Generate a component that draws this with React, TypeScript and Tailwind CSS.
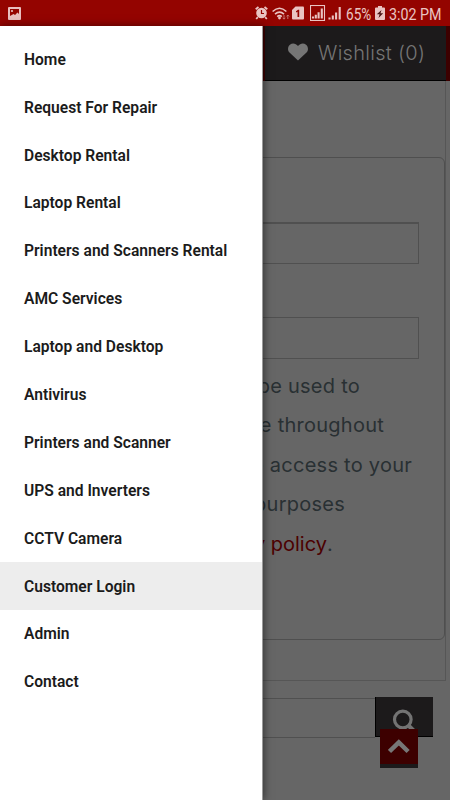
import React from "react";

const menu = [
  "Home",
  "Request For Repair",
  "Desktop Rental",
  "Laptop Rental",
  "Printers and Scanners Rental",
  "AMC Services",
  "Laptop and Desktop",
  "Antivirus",
  "Printers and Scanner",
  "UPS and Inverters",
  "CCTV Camera",
  "Customer Login",
  "Admin",
  "Contact",
];

function StatusBar() {
  return (
    <header className="flex h-[26px] items-center bg-[#940400] pl-2 pr-[9px] text-[#eac4c2]">
      <svg className="mt-px h-[13px] w-[13px]" viewBox="0 0 13 13" fill="none">
        <rect width="13" height="13" rx="1" fill="#e8bfbf" />
        <path d="M2 2h9v5L9.500 5.500 7 8 5.500 7 2 9z" fill="#940400" />
        <circle cx="4" cy="4" r="1.100" fill="#e8bfbf" />
      </svg>
      <div className="ml-auto flex items-center">
        <svg className="h-[14px] w-[13px]" viewBox="0 0 13 14" fill="none">
          <circle cx="6.500" cy="7" r="5.300" fill="#eac4c2" />
          <path d="M.7 3.200 3.500 1M12.300 3.200 9.500 1M2.800 11.200 1.200 13M10.200 11.200l1.600 1.800" stroke="#eac4c2" strokeWidth="1.800" />
          <path d="M6.500 4v3.500H9" stroke="#940400" strokeWidth="1.200" />
        </svg>
        <svg className="ml-1 h-[13px] w-[18px]" viewBox="0 0 18 13" fill="none">
          <path d="M.6 4.500Q7.500-2 14.400 4.500M3 7.200Q7.500 3.200 12 7.200M5.200 9.700q2.300-2 4.600 0" stroke="#eac4c2" strokeWidth="1.600" />
          <circle cx="7.500" cy="11" r="1.400" fill="#eac4c2" />
          <path d="M12 8v4M10.700 10.800 12 12.200l1.300-1.400M15.800 12V8m-1.300 1.400L15.800 8l1.300 1.400" stroke="#c9807d" strokeWidth=".9" />
        </svg>
        <svg className="ml-[2px] h-[14px] w-[12px]" viewBox="0 0 12 14">
          <path d="M3.500.5H11q1 0 1 1v11q0 1-1 1H1q-1 0-1-1V4z" fill="#eac4c2" />
          <path d="M4 5.200 6 3.800h1.200V11H5.500V5.800L4 6.500z" fill="#940400" />
        </svg>
        <svg className="ml-[6px] h-[16px] w-[16px]" viewBox="0 0 16 16" fill="none">
          <rect x=".5" y=".5" width="14" height="15" stroke="#eac4c2" strokeWidth="1.100" />
          <path d="M3 13.500v-2M5.800 13.500V9.800M8.600 13.500V7.200M11.800 13.500V3.500" stroke="#eac4c2" strokeWidth="2.100" />
        </svg>
        <svg className="ml-[2px] h-[14px] w-[14px]" viewBox="0 0 14 14" fill="none">
          <path d="M1.500 13.500v-2M4.800 13.500v-4M8.100 13.500v-7M11.700 13.500V1" stroke="#eac4c2" strokeWidth="2.100" />
        </svg>
        <div className="ml-[4px] w-[26px] font-['Roboto',sans-serif] text-[17px] leading-[26px]">
          <span className="inline-block origin-left scale-x-[0.8] whitespace-nowrap pt-px">65%</span>
        </div>
        <svg className="ml-[3px] h-[14px] w-[10px]" viewBox="0 0 10 14">
          <path d="M3 0h4v1.600h2q1 0 1 1V13q0 1-1 1H1q-1 0-1-1V2.600q0-1 1-1h2z" fill="#eac4c2" />
          <path d="M6.500 4 1.800 8.300h2.800L3.500 12l4.700-4.700H5.500z" fill="#4a1413" />
        </svg>
        <div className="ml-1 w-[52px] font-['Roboto',sans-serif] text-[17px] leading-[26px]">
          <span className="inline-block origin-left scale-x-[0.84] whitespace-nowrap pt-px">3:02 PM</span>
        </div>
      </div>
    </header>
  );
}

function Page() {
  return (
    <main className="h-[774px] overflow-hidden bg-[#666666] font-['Inter',sans-serif]">
      <div className="flex h-[55px] justify-end bg-[#3d0000] pr-[4px]">
        <div className="flex w-[181px] items-center border-b border-black bg-[#1c1a1b] pl-[22px] text-[#757575]">
          <svg className="-mt-[3px] h-[18px] w-[22px]" viewBox="0 0 22 19" fill="#757575">
            <path d="M11 18.500 2.300 10.400C-.5 7.700.2 3.700 2.500 1.900 5.400-.4 8.800.7 11 3.200 13.200.7 16.600-.4 19.500 1.900c2.300 1.800 3 5.800.2 8.500z" />
          </svg>
          <span className="ml-[9px] whitespace-nowrap text-[20px] font-light tracking-[0.300px]">Wishlist (0)</span>
        </div>
      </div>
      <section className="mr-[4px] h-[600px] border-b border-r border-[#565656] pt-[76px]">
        <div className="h-[483px] rounded-md border border-[#4f4f4f] pt-[64px]">
          <div className="mr-[25px] h-[42px] border border-t-2 border-[#505050]" />
          <div className="mr-[25px] mt-[53px] h-[42px] border border-[#505050]" />
          <div className="mt-[8px] text-right text-[20px] leading-[39.400px] tracking-[0.250px] text-[#293033]">
            <p className="pr-[84px]">be used to</p>
            <p className="pr-[60px]">experience throughout</p>
            <p className="pr-[32px]">manage access to your</p>
            <p className="pr-[99px]">other purposes</p>
            <p className="pr-[111px]">
              <span className="tracking-normal text-[#4c0000]">privacy policy</span>.
            </p>
          </div>
        </div>
      </section>
      <div className="relative mt-[16px] flex h-[40px] w-[433px]">
        <div className="mt-px h-[40px] flex-1 border-y border-[#505050]" />
        <div className="h-[40px] w-[58px] border-b border-l border-black bg-[#1c1a1b]">
          <svg className="ml-[16px] mt-[12px] h-[24px] w-[24px]" viewBox="0 0 24 24" fill="none" stroke="#737373" strokeWidth="3.200">
            <circle cx="10.800" cy="10.500" r="8.300" />
            <path d="m16.500 16.500 6 6" strokeWidth="4" />
          </svg>
        </div>
        <div className="absolute left-[380px] top-[32px] h-[39px] w-[38px] border-b-[4px] border-[#1c1a1b] bg-[#3d0000]">
          <svg className="ml-[8px] mt-[10px] h-[15px] w-[22px]" viewBox="0 0 22 15" fill="none" stroke="#777777" strokeWidth="4.500">
            <path d="m1.500 12.500 9.300-9 9.300 9" />
          </svg>
        </div>
      </div>
    </main>
  );
}

export default function App() {
  return (
    <div className="relative h-[800px] w-[450px] overflow-hidden">
      <StatusBar />
      <Page />
      <nav className="absolute bottom-0 left-0 top-[26px] w-[263px] border-r border-[#9a9a9a] bg-white pt-[9px] shadow-[1px_0_8px_rgba(0,0,0,0.5)]">
        {menu.map((item) => (
          <div
            key={item}
            className={`flex h-[47.900px] items-center pl-6 pt-[3px] font-['Roboto',sans-serif] text-[15.600px] font-semibold text-[#1b1b1b] ${
              item === "Customer Login" ? "bg-[#ededed]" : ""
            }`}
          >
            {item}
          </div>
        ))}
      </nav>
    </div>
  );
}
